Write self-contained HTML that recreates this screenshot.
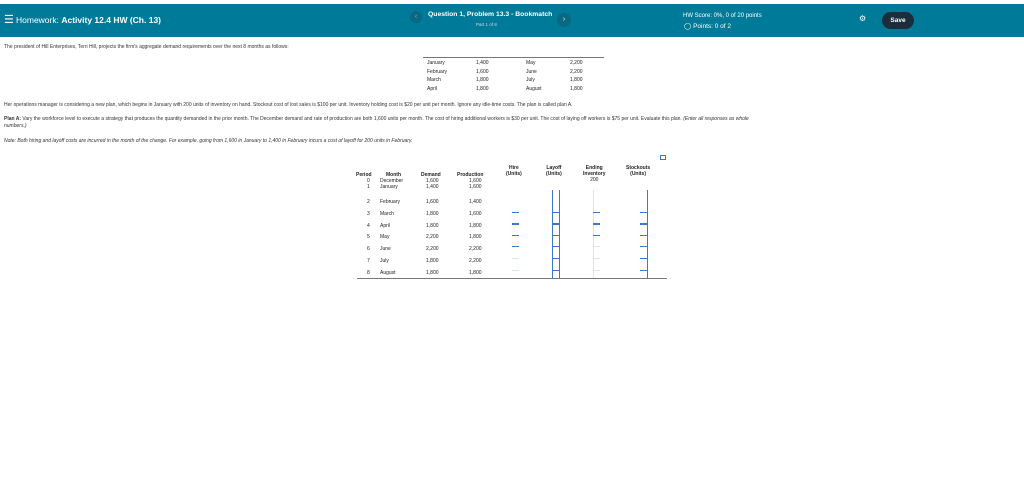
<!DOCTYPE html><html><head><style>
body{margin:0;width:1024px;height:478px;background:#fff;font-family:"Liberation Sans",sans-serif;position:relative;overflow:hidden}
.a{position:absolute;white-space:nowrap}
.hd{position:absolute;left:0;top:4px;width:1024px;height:33px;background:#007a99}
.t{font-size:5.5px;color:#333}
.s{font-size:5px;color:#222}
.in{position:absolute;border-left:1px solid #3a78c9;border-right:1px solid #3a78c9;width:6px}
.ln{position:absolute;height:1px;width:7px;background:#3a78c9}
</style></head><body>
<div class="hd"></div>
<div class="a" style="left:4px;top:13px;color:#fff;font-size:11px">☰</div>
<div class="a" style="left:16px;top:15px;color:#fff;font-size:8.5px">Homework: <b>Activity 12.4 HW (Ch. 13)</b></div>
<div class="a" style="left:410px;top:11px;width:12px;height:12px;border-radius:6px;background:#0a6883;color:#9cc;font-size:6px;text-align:center;line-height:12px">‹</div>
<div class="a" style="left:428px;top:11px;color:#fff;font-size:6.8px;font-weight:bold">Question 1, Problem 13.3 - Bookmatch</div>
<div class="a" style="left:476px;top:22px;color:#cde;font-size:4.5px">Part 1 of 8</div>
<div class="a" style="left:557px;top:13px;width:14px;height:14px;border-radius:7px;background:#0a6883;color:#fff;font-size:7px;text-align:center;line-height:14px">›</div>
<div class="a" style="left:683px;top:13px;color:#fff;font-size:6px">HW Score: 0%, 0 of 20 points</div>
<div class="a" style="left:684px;top:22px;color:#fff;font-size:6.5px">◯ Points: 0 of 2</div>
<div class="a" style="left:859px;top:14px;color:#fff;font-size:8px">⚙</div>
<div class="a" style="left:882px;top:12px;width:32px;height:17px;border-radius:9px;background:#1b2e3c;color:#fff;font-size:6.5px;font-weight:bold;text-align:center;line-height:17px">Save</div>
<div class="a t" style="left:4px;top:44px;font-size:5px">The president of Hill Enterprises, Terri Hill, projects the firm's aggregate demand requirements over the next 8 months as follows:</div>
<div class="a" style="left:423px;top:57px;width:181px;height:1px;background:#777"></div>
<div class="a s" style="left:427px;top:59px;line-height:8.5px">January<br>February<br>March<br>April</div>
<div class="a s" style="left:476px;top:59px;line-height:8.5px">1,400<br>1,600<br>1,800<br>1,800</div>
<div class="a s" style="left:526px;top:59px;line-height:8.5px">May<br>June<br>July<br>August</div>
<div class="a s" style="left:570px;top:59px;line-height:8.5px">2,200<br>2,200<br>1,800<br>1,800</div>
<div class="a t" style="left:4px;top:102px;font-size:5px">Her operations manager is considering a new plan, which begins in January with 200 units of inventory on hand. Stockout cost of lost sales is $100 per unit. Inventory holding cost is $20 per unit per month. Ignore any idle-time costs. The plan is called plan A.</div>
<div class="a t" style="left:4px;top:116px;font-size:5px"><b>Plan A:</b> Vary the workforce level to execute a strategy that produces the quantity demanded in the prior month. The December demand and rate of production are both 1,600 units per month. The cost of hiring additional workers is $30 per unit. The cost of laying off workers is $75 per unit. Evaluate this plan. <i>(Enter all responses as whole</i></div>
<div class="a t" style="left:4px;top:123px;font-size:5px"><i>numbers.)</i></div>
<div class="a t" style="left:4px;top:138px;font-size:5px"><i>Note: Both hiring and layoff costs are incurred in the month of the change. For example, going from 1,600 in January to 1,400 in February incurs a cost of layoff for 200 units in February.</i></div>
<div class="a" style="left:660px;top:155px;width:4px;height:3px;border:1px solid #3a78c9"></div>
<div class="a s" style="left:356px;top:172px;font-weight:bold">Period</div>
<div class="a s" style="left:386px;top:172px;font-weight:bold">Month</div>
<div class="a s" style="left:421px;top:172px;font-weight:bold">Demand</div>
<div class="a s" style="left:457px;top:172px;font-weight:bold">Production</div>
<div class="a s" style="left:506px;top:165px;font-weight:bold;text-align:center;line-height:6px">Hire<br>(Units)</div>
<div class="a s" style="left:546px;top:165px;font-weight:bold;text-align:center;line-height:6px">Layoff<br>(Units)</div>
<div class="a s" style="left:583px;top:165px;font-weight:bold;text-align:center;line-height:6px">Ending<br>Inventory<br><span style="font-weight:normal">200</span></div>
<div class="a s" style="left:626px;top:165px;font-weight:bold;text-align:center;line-height:6px">Stockouts<br>(Units)</div>
<div class="a s" style="left:367px;top:178px;line-height:6px">0<br>1</div>
<div class="a s" style="left:380px;top:178px;line-height:6px">December<br>January</div>
<div class="a s" style="left:426px;top:178px;line-height:6px">1,600<br>1,400</div>
<div class="a s" style="left:469px;top:178px;line-height:6px">1,600<br>1,600</div>
<div class="a s" style="left:367px;top:197px;line-height:11.8px">2<br>3<br>4<br>5<br>6<br>7<br>8</div>
<div class="a s" style="left:380px;top:197px;line-height:11.8px">February<br>March<br>April<br>May<br>June<br>July<br>August</div>
<div class="a s" style="left:426px;top:197px;line-height:11.8px">1,600<br>1,800<br>1,800<br>2,200<br>2,200<br>1,800<br>1,800</div>
<div class="a s" style="left:469px;top:197px;line-height:11.8px">1,400<br>1,600<br>1,800<br>1,800<br>2,200<br>2,200<br>1,800</div>
<div class="in" style="left:552px;top:190px;height:88px"></div>
<div class="a" style="left:647px;top:190px;width:1px;height:88px;background:#3a78c9"></div>
<div class="a" style="left:593px;top:190px;width:1px;height:88px;background:#d8e4f0"></div>
<div class="ln" style="left:512px;top:212px"></div><div class="ln" style="left:512px;top:223px;height:2px"></div><div class="ln" style="left:512px;top:235px"></div><div class="ln" style="left:512px;top:246px"></div><div class="ln" style="left:512px;top:258px;background:#d8e4f0"></div><div class="ln" style="left:512px;top:270px;background:#d8e4f0"></div>
<div class="ln" style="left:593px;top:212px"></div><div class="ln" style="left:593px;top:223px;height:2px"></div><div class="ln" style="left:593px;top:235px"></div><div class="ln" style="left:593px;top:246px;background:#d8e4f0"></div><div class="ln" style="left:593px;top:258px;background:#d8e4f0"></div><div class="ln" style="left:593px;top:270px;background:#d8e4f0"></div>
<div class="ln" style="left:640px;top:212px"></div><div class="ln" style="left:640px;top:223px;height:2px"></div><div class="ln" style="left:640px;top:235px"></div><div class="ln" style="left:640px;top:246px"></div><div class="ln" style="left:640px;top:258px"></div><div class="ln" style="left:640px;top:270px"></div>
<div class="ln" style="left:552px;top:212px;width:8px"></div><div class="ln" style="left:552px;top:223px;width:8px;height:2px"></div><div class="ln" style="left:552px;top:235px;width:8px"></div><div class="ln" style="left:552px;top:246px;width:8px"></div><div class="ln" style="left:552px;top:258px;width:8px"></div><div class="ln" style="left:552px;top:270px;width:8px"></div>
<div class="a" style="left:357px;top:278px;width:310px;height:1px;background:#777"></div>
</body></html>
